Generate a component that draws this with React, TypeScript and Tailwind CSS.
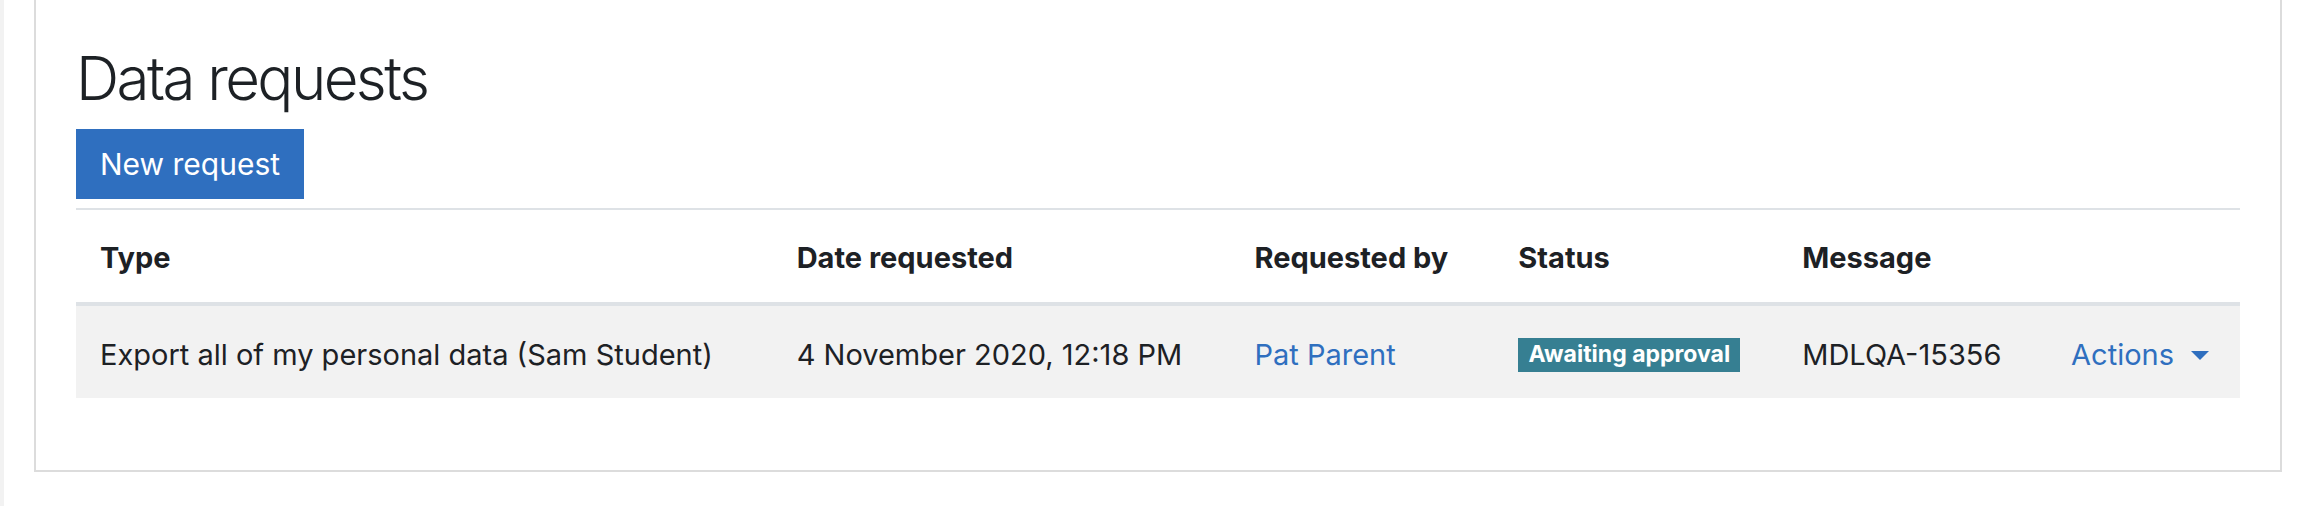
const columns = [
  { label: "Type", width: "w-[697px]" },
  { label: "Date requested", width: "w-[458px]" },
  { label: "Requested by", width: "w-[264px]" },
  { label: "Status", width: "w-[284px]" },
  { label: "Message", width: "w-[269px]" },
  { label: "", width: "w-[193px]" },
];

export default function App() {
  return (
    <div className="flex min-h-[506px] bg-white font-['Inter','Liberation_Sans',sans-serif] text-[#1d2125]">
      <div className="w-1 shrink-0 bg-[#f2f2f2]" />
      <div className="ml-[30px] h-[472px] w-[2248px] shrink-0 border-x-2 border-b-2 border-[#dcdcdc] px-10 pt-[42px]">
        <h2 className="mb-[15px] text-[60px] leading-[72px] font-light tracking-[-2.6px]">
          Data requests
        </h2>
        <button className="h-[70px] bg-[#2f6fbf] px-6 text-[30px] text-white">
          New request
        </button>

        <div className="mt-[9px] border-t-2 border-[#dee2e6]">
          <div className="flex h-[96px] border-b-4 border-[#dee2e6]">
            {columns.map((c) => (
              <div
                key={c.label || "actions"}
                className={`${c.width} flex items-center pl-6 pt-[3px] text-[29px] font-bold`}
              >
                {c.label}
              </div>
            ))}
          </div>

          <div className="flex h-[92px] items-center bg-[#f2f2f2] pt-[5px] text-[29px]">
            <div className="w-[697px] pl-6">
              Export all of my personal data (Sam Student)
            </div>
            <div className="w-[458px] pl-6">4 November 2020, 12:18 PM</div>
            <div className="w-[264px] pl-6 text-[#2f6fbf]">Pat Parent</div>
            <div className="w-[284px] pl-6">
              <span className="flex h-[34px] w-[222px] items-center justify-center bg-[#367f92] text-[23px] font-bold text-white">
                Awaiting approval
              </span>
            </div>
            <div className="w-[269px] pl-6">MDLQA-15356</div>
            <div className="flex w-[193px] items-center pl-6 text-[#2f6fbf]">
              Actions
              <span className="ml-[17px] mt-[2px] h-0 w-0 border-x-[9px] border-t-[9px] border-x-transparent border-t-[#2f6fbf]" />
            </div>
          </div>
        </div>
      </div>
    </div>
  );
}
